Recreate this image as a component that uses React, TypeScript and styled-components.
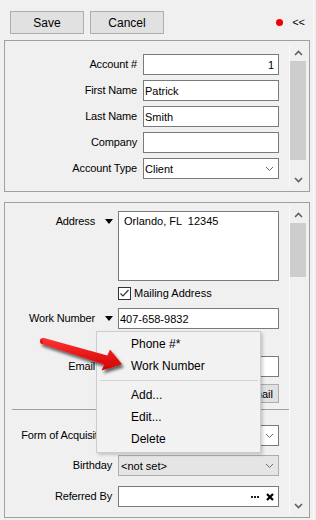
import React from 'react';
import styled, { createGlobalStyle } from 'styled-components';

const GlobalStyle = createGlobalStyle`
  html, body {
    margin: 0;
    padding: 0;
    background: #f0f0f0;
  }
  body {
    font-family: 'Liberation Sans', Arial, sans-serif;
    font-size: 11px;
    color: #000;
    overflow: hidden;
  }
  * {
    box-sizing: border-box;
  }
`

const Window = styled.div`
  position: relative;
  width: 314px;
  height: 520px;
  border-right: 1px solid #fbfbfb;
`

const Toolbar = styled.div`
  height: 40px;
  display: flex;
  align-items: flex-start;
  gap: 6px;
  padding: 11px 8px 0 10px;
`

const ToolButton = styled.button`
  width: 74px;
  height: 23px;
  padding: 0;
  border: 1px solid #adadad;
  background: #e1e1e1;
  font-family: 'Liberation Sans', Arial, sans-serif;
  font-size: 12px;
  color: #000;
`

const StatusDot = styled.span`
  width: 7px;
  height: 7px;
  margin: 8px 0 0 auto;
  border-radius: 50%;
  background: #ee0000;
`

const Collapse = styled.span`
  margin-left: 3px;
  line-height: 23px;
  font-size: 11px;
`

const Panel = styled.section<{ $height: number; $gap: number }>`
  display: flex;
  width: 306px;
  height: ${p => p.$height}px;
  margin: ${p => p.$gap}px 0 0 4px;
  padding: 3px 3px 3px 0;
  border: 1px solid #a0a0a0;
`

const PanelContent = styled.div<{ $top: number }>`
  flex: 1;
  min-width: 0;
  padding-top: ${p => p.$top}px;
`

const Scrollbar = styled.div`
  width: 17px;
  display: flex;
  flex-direction: column;
  border-left: 1px solid #fafafa;
`

const ScrollArrow = styled.div`
  height: 17px;
  display: flex;
  align-items: center;
  justify-content: center;
`

const ScrollTrack = styled.div`
  flex: 1;
`

const Thumb = styled.div<{ $height: number }>`
  height: ${p => p.$height}px;
  background: #cdcdcd;
`

const FieldGrid = styled.div`
  display: grid;
  grid-template-columns: 132px 136px;
  grid-auto-rows: 21px;
  column-gap: 6px;
  row-gap: 5px;
`

const FieldRow = styled.div<{ $top: number; $height: number }>`
  display: grid;
  grid-template-columns: 107px 161px;
  grid-template-rows: ${p => p.$height}px;
  column-gap: 6px;
  align-items: center;
  margin-top: ${p => p.$top}px;
`

const Label = styled.label<{ $top?: boolean }>`
  display: flex;
  justify-content: flex-end;
  align-items: center;
  align-self: ${p => (p.$top ? 'start' : 'center')};
  gap: 10px;
  line-height: 21px;
  letter-spacing: -0.15px;
  white-space: nowrap;
`

const DropMarker = styled.span`
  width: 0;
  height: 0;
  border-left: 4.5px solid transparent;
  border-right: 4.5px solid transparent;
  border-top: 5px solid #000;
  margin-right: -1px;
`

const TextBox = styled.input<{ $align?: 'left' | 'right' }>`
  width: 100%;
  height: 21px;
  padding: 0 4px 0 1px;
  border: 1px solid #7a7a7a;
  background: #fff;
  font-family: 'Liberation Sans', Arial, sans-serif;
  font-size: 11px;
  color: #000;
  text-align: ${p => p.$align ?? 'left'};
  outline: none;
`

const TextArea = styled.textarea`
  width: 100%;
  height: 70px;
  padding: 3px 5px;
  border: 1px solid #7a7a7a;
  background: #fff;
  font-family: 'Liberation Sans', Arial, sans-serif;
  font-size: 11px;
  line-height: 13px;
  color: #000;
  resize: none;
  outline: none;
`

const Combo = styled.div<{ $disabled?: boolean }>`
  height: 21px;
  display: flex;
  align-items: center;
  justify-content: space-between;
  padding: 0 4px 0 ${p => (p.$disabled ? 2 : 1)}px;
  border: 1px solid ${p => (p.$disabled ? '#adadad' : '#7a7a7a')};
  background: ${p => (p.$disabled ? '#e5e5e5' : '#fff')};
`

const LookupBox = styled.div`
  height: 21px;
  display: flex;
  align-items: center;
  justify-content: flex-end;
  gap: 7px;
  padding-right: 4px;
  border: 1px solid #7a7a7a;
  background: #fff;
`

const CheckRow = styled.label`
  grid-column: 2;
  display: flex;
  align-items: center;
  gap: 3px;
  line-height: 13px;
`

const CheckBox = styled.span`
  width: 13px;
  height: 13px;
  display: flex;
  border: 1px solid #333;
  background: #fff;
`

const SmallButton = styled.button`
  grid-column: 2;
  justify-self: end;
  height: 19px;
  padding: 0 5px;
  border: 1px solid #adadad;
  background: #e1e1e1;
  font-family: 'Liberation Sans', Arial, sans-serif;
  font-size: 11px;
  color: #000;
`

const Divider = styled.hr`
  margin: 6px 0 0 7px;
  border: 0;
  border-top: 1px solid #a0a0a0;
`

const Menu = styled.div`
  position: absolute;
  left: 96px;
  top: 331px;
  width: 165px;
  padding: 1px 2px 2px;
  border: 1px solid #cccccc;
  background: #f2f2f2;
  box-shadow: 2px 2px 3px rgba(0, 0, 0, 0.18);
  font-size: 12px;
`

const MenuItem = styled.div`
  height: 22px;
  line-height: 22px;
  padding-left: 32px;
  white-space: nowrap;
`

const MenuSeparator = styled.div`
  height: 7px;
  margin: 0 0 0 1px;
  padding-top: 3px;
  &::after {
    content: '';
    display: block;
    border-top: 1px solid #d4d4d4;
  }
`

const Pointer = styled.svg`
  position: absolute;
  left: 36px;
  top: 332px;
  overflow: visible;
  pointer-events: none;
`

const Chevron = ({ up, color = '#606060', w = 1.6 }: { up?: boolean; color?: string; w?: number }) => (
  <svg width="9" height="6" viewBox="0 0 9 6">
    <polyline
      points={up ? '1,5 4.5,1.5 8,5' : '1,1 4.5,4.5 8,1'}
      fill="none"
      stroke={color}
      strokeWidth={w}
    />
  </svg>
)

const ScrollBar = ({ thumbTop, thumbHeight }: { thumbTop: number; thumbHeight: number }) => (
  <Scrollbar>
    <ScrollArrow>
      <Chevron up />
    </ScrollArrow>
    <ScrollTrack style={{ paddingTop: thumbTop }}>
      <Thumb $height={thumbHeight} />
    </ScrollTrack>
    <ScrollArrow>
      <Chevron />
    </ScrollArrow>
  </Scrollbar>
)

const ComboChevron = () => <Chevron color="#6d6d6d" w={1} />

export default function App() {
  return (
    <>
      <GlobalStyle />
      <Window>
        <Toolbar>
          <ToolButton>Save</ToolButton>
          <ToolButton>Cancel</ToolButton>
          <StatusDot />
          <Collapse>&lt;&lt;</Collapse>
        </Toolbar>

        <Panel $height={152} $gap={0}>
          <PanelContent $top={10}>
            <FieldGrid>
              <Label>Account #</Label>
              <TextBox $align="right" defaultValue="1" readOnly />
              <Label>First Name</Label>
              <TextBox defaultValue="Patrick" readOnly />
              <Label>Last Name</Label>
              <TextBox defaultValue="Smith" readOnly />
              <Label>Company</Label>
              <TextBox defaultValue="" readOnly />
              <Label>Account Type</Label>
              <Combo>
                <span>Client</span>
                <ComboChevron />
              </Combo>
            </FieldGrid>
          </PanelContent>
          <ScrollBar thumbTop={0} thumbHeight={99} />
        </Panel>

        <Panel $height={316} $gap={10}>
          <PanelContent $top={5}>
            <FieldRow $top={0} $height={70}>
              <Label $top>
                Address <DropMarker />
              </Label>
              <TextArea defaultValue="Orlando, FL  12345" readOnly />
            </FieldRow>
            <FieldRow $top={6} $height={13}>
              <CheckRow>
                <CheckBox>
                  <svg width="11" height="11" viewBox="0 0 11 11">
                    <polyline points="1.5,5.5 4,8 9.5,2" fill="none" stroke="#333" strokeWidth="1.2" />
                  </svg>
                </CheckBox>
                Mailing Address
              </CheckRow>
            </FieldRow>
            <FieldRow $top={8} $height={21}>
              <Label>
                Work Number <DropMarker />
              </Label>
              <TextBox defaultValue="407-658-9832" readOnly />
            </FieldRow>
            <FieldRow $top={27} $height={21}>
              <Label>
                Email <DropMarker />
              </Label>
              <TextBox defaultValue="" readOnly />
            </FieldRow>
            <FieldRow $top={7} $height={19}>
              <SmallButton>Email</SmallButton>
            </FieldRow>
            <Divider />
            <FieldRow $top={15} $height={21}>
              <Label>Form of Acquisition</Label>
              <Combo>
                <span />
                <ComboChevron />
              </Combo>
            </FieldRow>
            <FieldRow $top={9} $height={21}>
              <Label>Birthday</Label>
              <Combo $disabled>
                <span>&lt;not set&gt;</span>
                <ComboChevron />
              </Combo>
            </FieldRow>
            <FieldRow $top={10} $height={21}>
              <Label>Referred By</Label>
              <LookupBox>
                <svg width="8" height="2" viewBox="0 0 8 2">
                  <rect x="0" y="0" width="2" height="2" fill="#222" />
                  <rect x="3" y="0" width="2" height="2" fill="#222" />
                  <rect x="6" y="0" width="2" height="2" fill="#222" />
                </svg>
                <svg width="8" height="8" viewBox="0 0 8 8">
                  <path d="M1 1 L7 7 M7 1 L1 7" stroke="#000" strokeWidth="2.2" />
                </svg>
              </LookupBox>
            </FieldRow>
          </PanelContent>
          <ScrollBar thumbTop={0} thumbHeight={54} />
        </Panel>

        <Menu>
          <MenuItem>Phone #*</MenuItem>
          <MenuItem>Work Number</MenuItem>
          <MenuSeparator />
          <MenuItem>Add...</MenuItem>
          <MenuItem>Edit...</MenuItem>
          <MenuItem>Delete</MenuItem>
        </Menu>

        <Pointer width="100" height="50" viewBox="0 0 100 50">
          <defs>
            <linearGradient id="arrowFill" x1="0" y1="0" x2="0" y2="1">
              <stop offset="0" stopColor="#ff3434" />
              <stop offset="1" stopColor="#d00000" />
            </linearGradient>
            <filter id="arrowShadow" x="-20%" y="-40%" width="150%" height="200%">
              <feDropShadow dx="2" dy="3" stdDeviation="1.4" floodColor="#000" floodOpacity="0.6" />
            </filter>
          </defs>
          <g filter="url(#arrowShadow)" fill="url(#arrowFill)">
            <circle cx="7" cy="9" r="3.1" />
            <polygon points="7.9,6.1 71.3,23.4 74,17.5 86,32.3 65.5,38.5 68.3,32.4 6.1,11.9" />
          </g>
        </Pointer>
      </Window>
    </>
  )
}
